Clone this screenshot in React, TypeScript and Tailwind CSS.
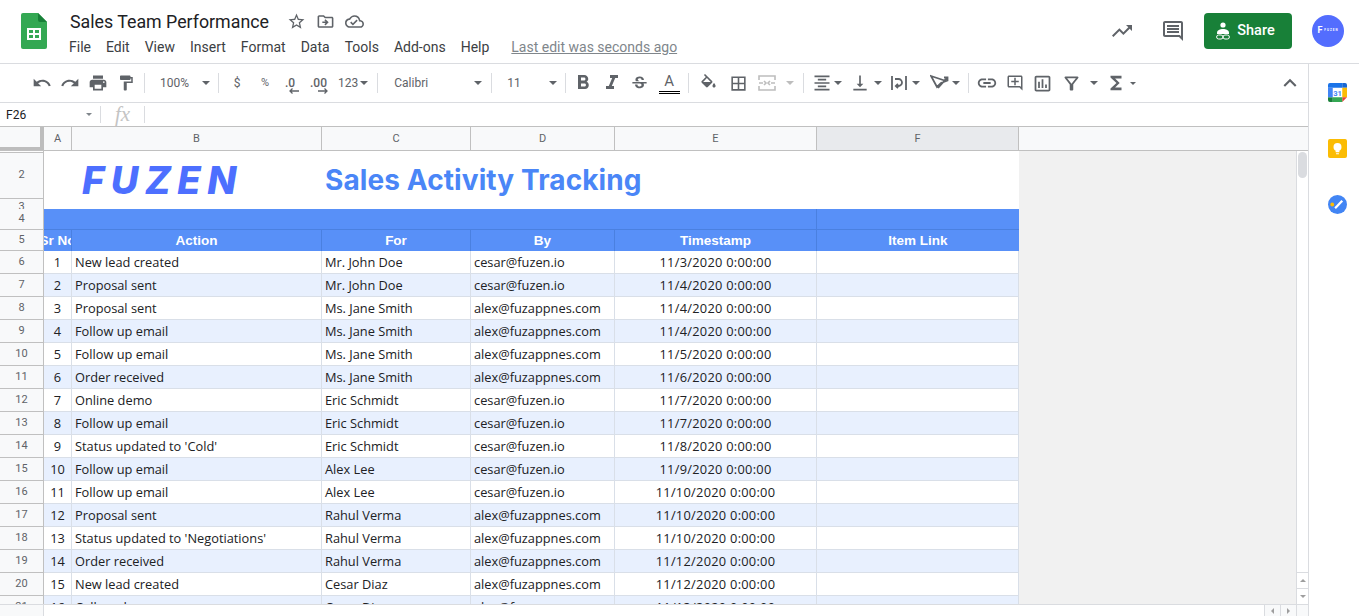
import {
  MdUndo,
  MdRedo,
  MdPrint,
  MdFormatPaint,
  MdFormatBold,
  MdFormatItalic,
  MdStrikethroughS,
  MdBorderAll,
  MdFormatAlignCenter,
  MdVerticalAlignBottom,
  MdLink,
  MdOutlineAddComment,
  MdOutlineInsertChart,
  MdOutlineFilterAlt,
  MdFunctions,
  MdExpandLess,
  MdStarBorder,
  MdOutlineDriveFileMove,
  MdOutlineCloudDone,
  MdTrendingUp,
  MdOutlineComment,
} from "react-icons/md";

const rows = [
  ["1", "New lead created", "Mr. John Doe", "cesar@fuzen.io", "11/3/2020 0:00:00"],
  ["2", "Proposal sent", "Mr. John Doe", "cesar@fuzen.io", "11/4/2020 0:00:00"],
  ["3", "Proposal sent", "Ms. Jane Smith", "alex@fuzappnes.com", "11/4/2020 0:00:00"],
  ["4", "Follow up email", "Ms. Jane Smith", "alex@fuzappnes.com", "11/4/2020 0:00:00"],
  ["5", "Follow up email", "Ms. Jane Smith", "alex@fuzappnes.com", "11/5/2020 0:00:00"],
  ["6", "Order received", "Ms. Jane Smith", "alex@fuzappnes.com", "11/6/2020 0:00:00"],
  ["7", "Online demo", "Eric Schmidt", "cesar@fuzen.io", "11/7/2020 0:00:00"],
  ["8", "Follow up email", "Eric Schmidt", "cesar@fuzen.io", "11/7/2020 0:00:00"],
  ["9", "Status updated to 'Cold'", "Eric Schmidt", "cesar@fuzen.io", "11/8/2020 0:00:00"],
  ["10", "Follow up email", "Alex Lee", "cesar@fuzen.io", "11/9/2020 0:00:00"],
  ["11", "Follow up email", "Alex Lee", "cesar@fuzen.io", "11/10/2020 0:00:00"],
  ["12", "Proposal sent", "Rahul Verma", "alex@fuzappnes.com", "11/10/2020 0:00:00"],
  ["13", "Status updated to 'Negotiations'", "Rahul Verma", "alex@fuzappnes.com", "11/10/2020 0:00:00"],
  ["14", "Order received", "Rahul Verma", "alex@fuzappnes.com", "11/12/2020 0:00:00"],
  ["15", "New lead created", "Cesar Diaz", "alex@fuzappnes.com", "11/12/2020 0:00:00"],
  ["16", "Call made", "Cesar Diaz", "alex@fuzappnes.com", "11/13/2020 0:00:00"],
];

const menus = ["File", "Edit", "View", "Insert", "Format", "Data", "Tools", "Add-ons", "Help"];

const colTemplate = "grid grid-cols-[28px_250px_149px_144px_202px_202px]";

const Sep = () => <div className="w-px h-5 bg-[#dadce0] shrink-0" />;

const Caret = ({ className = "" }: { className?: string }) => (
  <div className={`w-0 h-0 shrink-0 border-x-[4px] border-x-transparent border-t-[4px] border-t-[#5f6368] ${className}`} />
);

const Header = () => (
  <div className="h-[64px] shrink-0 flex border-b border-[#dadce0] bg-white">
    {/* Sheets logo */}
    <div className="w-[69px] pl-[21px] pt-[13px] shrink-0">
      <svg width="26" height="36" viewBox="0 0 26 36">
        <path d="M2 0h15l9 9v25a2 2 0 0 1-2 2H2a2 2 0 0 1-2-2V2a2 2 0 0 1 2-2z" fill="#34a853" />
        <path d="M17 0l9 9h-7a2 2 0 0 1-2-2z" fill="#188038" />
        <path d="M6 15h14v12H6z" fill="#fff" />
        <path d="M8 17h4v3H8zM14 17h4v3h-4zM8 22h4v3H8zM14 22h4v3h-4z" fill="#34a853" />
      </svg>
    </div>
    <div className="flex-1 pt-[10px]">
      <div className="flex items-center h-[23px] pl-px">
        <span className="text-[17.8px] leading-[23px] text-[#202124] font-['Roboto',sans-serif]">Sales Team Performance</span>
        <div className="flex items-center gap-[10px] ml-[18px] text-[#5f6368]">
          <MdStarBorder size={19} />
          <MdOutlineDriveFileMove size={19} />
          <MdOutlineCloudDone size={19} />
        </div>
      </div>
      <div className="flex items-center gap-[15px] mt-[4px] text-[14px] leading-[20px] text-[#3c4043] font-['Roboto',sans-serif]">
        {menus.map((m) => (
          <span key={m}>{m}</span>
        ))}
        <span className="ml-[7px] text-[#80868b] underline">Last edit was seconds ago</span>
      </div>
    </div>
    <div className="flex items-center pb-[2px] text-[#5f6368]">
      <MdTrendingUp size={24} className="mr-[27px]" />
      <MdOutlineComment size={24} className="mr-[19px]" />
      <div className="w-[88px] h-9 pr-[5px] rounded-[4px] bg-[#188038] flex items-center justify-center gap-[7px] text-white text-[14.500px] font-medium font-['Roboto',sans-serif]">
        <svg width="14" height="18" viewBox="0 0 14 18" fill="none">
          <circle cx="7" cy="3" r="2.6" fill="#fff" />
          <path d="M1 11c0-3 3-4 6-4s6 1 6 4v1H1z" fill="#fff" />
          <rect x="0.6" y="13" width="6.4" height="4" rx="2" stroke="#fff" strokeWidth="1" />
          <rect x="7" y="13" width="6.4" height="4" rx="2" stroke="#fff" strokeWidth="1" />
        </svg>
        Share
      </div>
      <div className="w-8 h-8 ml-[20px] mr-[15px] rounded-full bg-[#536dfe] flex items-center justify-center gap-[2px] text-white">
        <span className="text-[9px] leading-none font-bold">F</span>
        <span className="text-[3px] leading-none font-bold tracking-[1px]">FUZEN</span>
      </div>
    </div>
  </div>
);

const Toolbar = () => (
  <div className="h-[39px] shrink-0 flex items-center border-b border-[#dadce0] pl-[32px] text-[#5f6368] font-['Roboto',sans-serif] text-[12px]">
    <MdUndo size={20} className="shrink-0" />
    <MdRedo size={20} className="ml-[8px] shrink-0" />
    <MdPrint size={20} className="ml-[8px] shrink-0" />
    <MdFormatPaint size={18} className="ml-[9px] shrink-0" />
    <div className="ml-[9px]"><Sep /></div>
    <span className="ml-[15px] w-[30px]">100%</span>
    <Caret className="ml-[12px]" />
    <div className="ml-[8px]"><Sep /></div>
    <span className="ml-[13px] w-[10px] text-center">$</span>
    <span className="ml-[18px] w-[10px] text-center text-[11px]">%</span>
    <span className="ml-[15px] w-[14px] relative font-medium leading-none">
      .0
      <svg width="10" height="6" viewBox="0 0 10 6" className="absolute left-[4px] top-[11px]" fill="none" stroke="#5f6368" strokeWidth="1.300">
        <path d="M10 3H1M3.500 .5 1 3l2.500 2.500" />
      </svg>
    </span>
    <span className="ml-[11px] w-[18px] relative font-medium leading-none">
      .00
      <svg width="10" height="6" viewBox="0 0 10 6" className="absolute left-[8px] top-[11px]" fill="none" stroke="#5f6368" strokeWidth="1.300">
        <path d="M0 3h9M6.500 .5 9 3 6.500 5.500" />
      </svg>
    </span>
    <span className="ml-[10px]">123</span>
    <Caret className="ml-[2px]" />
    <div className="ml-[9px]"><Sep /></div>
    <span className="ml-[16px] w-[80px]">Calibri</span>
    <Caret />
    <div className="ml-[9px]"><Sep /></div>
    <span className="ml-[15px] w-[42px]">11</span>
    <Caret />
    <div className="ml-[8px]"><Sep /></div>
    <MdFormatBold size={24} className="ml-[5px] shrink-0" />
    <MdFormatItalic size={24} className="ml-[5px] shrink-0" />
    <MdStrikethroughS size={19} className="ml-[6px] shrink-0" />
    <div className="ml-[9px] w-[22px] flex flex-col items-center shrink-0">
      <span className="text-[15px] leading-[16px]">A</span>
      <div className="w-[21px] h-[3px] border-y border-black mt-[2px]" />
    </div>
    <div className="ml-[8px]"><Sep /></div>
    <svg width="19" height="19" viewBox="0 0 24 24" className="ml-[10px] shrink-0" fill="#5f6368">
      <path fillRule="evenodd" d="M16.560 8.940 7.620 0 6.210 1.410l2.380 2.380-5.150 5.150a1.500 1.500 0 0 0 0 2.120l5.500 5.500c.29.29.68.44 1.060.44s.77-.15 1.060-.44l5.500-5.500c.59-.58.59-1.530 0-2.120zM5.210 10 10 5.210 14.790 10H5.210zM19 11.500s-2 2.170-2 3.500c0 1.100.9 2 2 2s2-.9 2-2c0-1.330-2-3.500-2-3.500z" />
    </svg>
    <MdBorderAll size={19} className="ml-[11px] shrink-0" />
    <svg width="18" height="18" viewBox="0 0 18 18" className="ml-[10px] shrink-0" fill="none" stroke="#bdbdbd" strokeWidth="2">
      <path d="M1 6V2h16v4M1 12v4h16v-4M1 9h4M13 9h4M6 7l2 2-2 2M12 7l-2 2 2 2" strokeWidth="1.600" />
    </svg>
    <Caret className="ml-[10px] border-t-[#bdbdbd]" />
    <div className="ml-[9px]"><Sep /></div>
    <MdFormatAlignCenter size={20} className="ml-[8px] shrink-0" />
    <Caret className="ml-[2px]" />
    <MdVerticalAlignBottom size={20} className="ml-[8px] shrink-0" />
    <Caret className="ml-[4px]" />
    <svg width="18" height="18" viewBox="0 0 18 18" className="ml-[8px] shrink-0" fill="none" stroke="#5f6368" strokeWidth="1.800">
      <path d="M2 2v14M16 2v14M5 5h3.500a3.500 3.500 0 0 1 0 7H6M8 9.800 5.800 12 8 14.200" />
    </svg>
    <Caret className="ml-[4px]" />
    <svg width="20" height="18" viewBox="0 0 20 18" className="ml-[10px] shrink-0" fill="none" stroke="#5f6368" strokeWidth="1.800">
      <path d="M1 2l15 5-5 2-4 4zM8 14l9-10M14 3.500h3.500V7" />
    </svg>
    <Caret className="ml-[2px]" />
    <div className="ml-[8px]"><Sep /></div>
    <MdLink size={22} className="ml-[7px] shrink-0" />
    <MdOutlineAddComment size={18} className="ml-[8px] shrink-0" />
    <MdOutlineInsertChart size={21} className="ml-[8px] shrink-0" />
    <MdOutlineFilterAlt size={21} className="ml-[8px] shrink-0" />
    <Caret className="ml-[8px]" />
    <MdFunctions size={22} className="ml-[7px] shrink-0" />
    <div className="ml-[3px] w-0 h-0 shrink-0 border-x-[3px] border-x-transparent border-t-[3px] border-t-[#5f6368]" />
    <div className="flex-1" />
    <MdExpandLess size={26} className="mr-[5px] shrink-0" />
  </div>
);

const FormulaBar = () => (
  <div className="h-[24px] shrink-0 flex items-center border-b border-[#c0c0c0] text-[12px] font-['Roboto',sans-serif] text-[#202124]">
    <span className="w-[86px] pl-[6px]">F26</span>
    <div className="w-0 h-0 border-x-[3px] border-x-transparent border-t-[3px] border-t-[#80868b] mr-[8px]" />
    <div className="w-px h-[17px] bg-[#dadce0]" />
    <span className="w-[43px] text-center font-['Liberation_Serif',serif] italic text-[#c4c4c4] text-[21px] leading-none">fx</span>
    <div className="w-px h-[17px] bg-[#dadce0]" />
  </div>
);

const RowNum = ({ n, h }: { n: string; h: string }) => (
  <div className={`w-[44px] ${h} shrink-0 bg-[#f8f9fa] border-b border-r border-[#c0c0c0] flex items-center justify-center text-[11px] text-[#5f6368]`}>
    {n}
  </div>
);

const Sheet = () => (
  <div className="h-[477px] shrink-0 flex flex-col font-['Roboto',sans-serif]">
    {/* column letters */}
    <div className="flex h-[24px] border-b border-[#c0c0c0] shrink-0">
      <div className="w-[44px] shrink-0 bg-[#f8f9fa] border-r-[4px] border-b-[3px] border-[#bdbdbd]" />
      <div className={`${colTemplate} w-[975px] bg-[#f8f9fa] text-[11px] text-[#5f6368] text-center leading-[23px]`}>
        <div className="border-r border-[#c0c0c0]">A</div>
        <div className="border-r border-[#c0c0c0]">B</div>
        <div className="border-r border-[#c0c0c0]">C</div>
        <div className="border-r border-[#c0c0c0]">D</div>
        <div className="border-r border-[#c0c0c0]">E</div>
        <div className="border-r border-[#c0c0c0] bg-[#e8eaed]">F</div>
      </div>
      <div className="flex-1 bg-[#f8f9fa]" />
    </div>

    <div className="flex flex-1 min-h-0">
      <div className="flex-1 min-w-0 bg-[#f1f1f1] overflow-hidden">
        <div className="w-[1019px] bg-white">
          {/* logo and title block */}
          <div className="flex h-[58px]">
            <div className="w-[44px] shrink-0 flex flex-col">
              <div className="h-[2px] bg-[#fdfdfd] border-b border-[#c0c0c0] border-r" />
              <RowNum n="2" h="h-[46px]" />
              <div className="h-[10px] overflow-hidden bg-[#f8f9fa] border-r border-[#c0c0c0] text-center text-[11px] leading-[16px] text-[#5f6368]">3</div>
            </div>
            <div className="flex items-center h-[58px]">
              <span className="ml-[38px] w-[243px] text-[38px] leading-none font-extrabold italic tracking-[6.500px] text-[#4d6fff] font-['Inter',sans-serif]">FUZEN</span>
              <span className="text-[28px] leading-none font-bold tracking-[0.1px] text-[#4a86f7] font-['Inter',sans-serif]">Sales Activity Tracking</span>
            </div>
          </div>

          {/* blue banner */}
          <div className="flex">
            <RowNum n="4" h="h-[21px]" />
            <div className={`${colTemplate} w-[975px] h-[21px] bg-[#5890f8] border-b border-[#4a80e0]`}>
              <div className="col-span-5 border-r border-[#4a80e0]" />
              <div />
            </div>
          </div>
          <div className="flex">
            <RowNum n="5" h="h-[21px]" />
            <div className={`${colTemplate} w-[975px] h-[21px] bg-[#5890f8] text-white text-center font-bold text-[13.500px] leading-[21px] font-['Liberation_Sans',sans-serif]`}>
              <div className="border-r border-[#4a80e0] overflow-hidden whitespace-nowrap flex justify-center">Sr No</div>
              <div className="border-r border-[#4a80e0]">Action</div>
              <div className="border-r border-[#4a80e0]">For</div>
              <div className="border-r border-[#4a80e0]">By</div>
              <div className="border-r border-[#4a80e0]">Timestamp</div>
              <div>Item Link</div>
            </div>
          </div>

          {/* data rows */}
          {rows.map((r, i) => (
            <div key={r[0]} className="flex">
              <RowNum n={String(i + 6)} h="h-[23px]" />
              <div className={`${colTemplate} w-[975px] h-[23px] border-b border-[#d9dfe8] text-[12.800px] leading-[22px] text-[#202124] font-['Open_Sans',sans-serif] ${i % 2 === 1 ? "bg-[#e8f0fe]" : "bg-white"}`}>
                <div className="border-r border-[#d9dfe8] text-center">{r[0]}</div>
                <div className="border-r border-[#d9dfe8] pl-[3px]">{r[1]}</div>
                <div className="border-r border-[#d9dfe8] pl-[3px]">{r[2]}</div>
                <div className="border-r border-[#d9dfe8] pl-[3px]">{r[3]}</div>
                <div className="border-r border-[#d9dfe8] text-center tracking-[0.28px]">{r[4]}</div>
                <div className="border-r border-[#d9dfe8]" />
              </div>
            </div>
          ))}
        </div>
      </div>

      {/* vertical scrollbar */}
      <div className="w-[12px] shrink-0 bg-white border-l border-[#dadce0] flex flex-col">
        <div className="h-[26px] mt-[1px] mx-[1px] rounded-full bg-[#dadce0] shrink-0" />
        <div className="flex-1" />
        <div className="h-[16px] border-t border-[#dadce0] flex items-center justify-center">
          <div className="w-0 h-0 border-x-[3px] border-x-transparent border-b-[3px] border-b-[#9e9e9e]" />
        </div>
        <div className="h-[16px] border-t border-[#dadce0] flex items-center justify-center">
          <div className="w-0 h-0 border-x-[3px] border-x-transparent border-t-[3px] border-t-[#9e9e9e]" />
        </div>
      </div>
    </div>
  </div>
);

const BottomBar = () => (
  <div className="h-[12px] shrink-0 flex border-t border-[#dadce0] bg-white">
    <div className="w-[44px] bg-[#f8f9fa] border-r border-[#dadce0]" />
    <div className="flex-1" />
    <div className="w-[16px] bg-[#f8f9fa] border-l border-[#dadce0] flex items-center justify-center">
      <div className="w-0 h-0 border-y-[3px] border-y-transparent border-r-[3px] border-r-[#9e9e9e]" />
    </div>
    <div className="w-[16px] bg-[#f8f9fa] border-l border-[#dadce0] flex items-center justify-center">
      <div className="w-0 h-0 border-y-[3px] border-y-transparent border-l-[3px] border-l-[#9e9e9e]" />
    </div>
    <div className="w-[12px] bg-[#f8f9fa] border-l border-[#dadce0]" />
  </div>
);

const SidePanel = () => (
  <div className="w-[51px] shrink-0 border-l border-[#dadce0] flex flex-col items-center pt-[19px] pl-[7px] gap-[37px]">
    <svg width="19" height="19" viewBox="0 0 20 20">
      <rect width="20" height="20" rx="2" fill="#fff" />
      <path d="M0 5V2a2 2 0 0 1 2-2h13v5z" fill="#1a73e8" />
      <path d="M15 0h3a2 2 0 0 1 2 2v3h-5z" fill="#1967d2" />
      <path d="M15 5h5v10h-5z" fill="#fbbc04" />
      <path d="M15 15h5l-5 5z" fill="#ea4335" />
      <path d="M5 15h10v5H5z" fill="#34a853" />
      <path d="M0 15h5v5H2a2 2 0 0 1-2-2z" fill="#188038" />
      <path d="M0 5h5v10H0z" fill="#4285f4" />
      <text x="10" y="13.500" textAnchor="middle" fontSize="8" fontWeight="700" fill="#4285f4" fontFamily="Roboto, sans-serif">31</text>
    </svg>
    <svg width="19" height="19" viewBox="0 0 20 20">
      <rect width="20" height="20" rx="2" fill="#fbbc04" />
      <circle cx="10" cy="8.500" r="4.200" fill="#fff" />
      <path d="M8 12h4v2H8zM8.500 15h3v1h-3z" fill="#fff" />
    </svg>
    <svg width="19" height="19" viewBox="0 0 20 20">
      <circle cx="10" cy="10" r="10" fill="#4285f4" />
      <circle cx="4.500" cy="10" r="2" fill="#fbbc04" />
      <path d="M7.500 14 15 6" stroke="#fff" strokeWidth="2.400" fill="none" />
    </svg>
  </div>
);

export default function App() {
  return (
    <div className="w-[1359px] h-[616px] overflow-hidden bg-white flex flex-col font-['Roboto',sans-serif]">
      <Header />
      <div className="flex flex-1 min-h-0">
        <div className="flex-1 min-w-0 flex flex-col">
          <Toolbar />
          <FormulaBar />
          <Sheet />
          <BottomBar />
        </div>
        <SidePanel />
      </div>
    </div>
  );
}
